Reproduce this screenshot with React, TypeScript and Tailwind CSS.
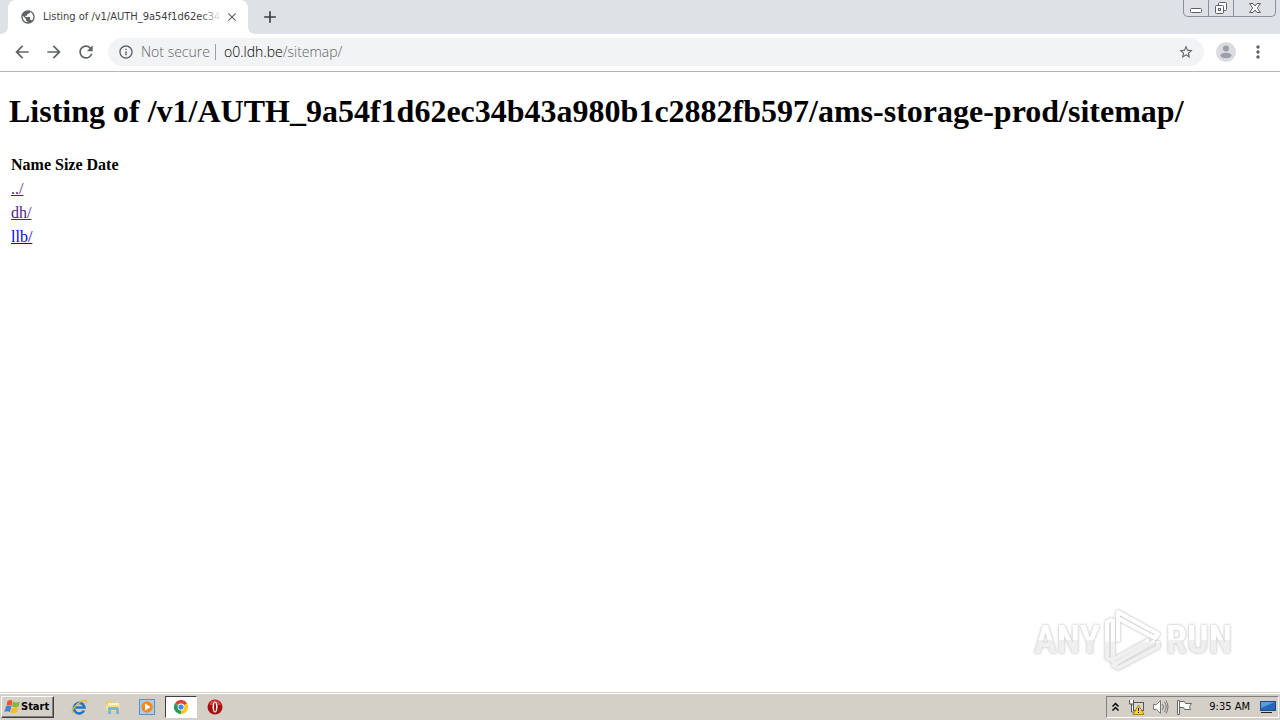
import type { ReactNode } from 'react';
import { MdArrowBack, MdArrowForward, MdRefresh, MdStarBorder, MdMoreVert, MdInfoOutline, MdPublic, MdClose, MdAdd } from 'react-icons/md';

const ENTRIES = [
  { name: '../', visited: true },
  { name: 'dh/', visited: true },
  { name: 'llb/', visited: false },
];

const WindowControls = () => (
  <div className="flex h-[17px] w-[93px] rounded-b-[5px] border border-t-0 border-[#8b9097] text-[#5c6066]">
    <button aria-label="Minimize" className="flex w-[25px] items-center justify-center border-r border-[#8b9097]">
      <svg width="14" height="16" fill="#fff" stroke="currentColor">
        <rect x="1.5" y="8.5" width="11" height="4" rx="1" />
      </svg>
    </button>
    <button aria-label="Restore" className="flex w-[25px] items-center justify-center border-r border-[#8b9097]">
      <svg width="14" height="16" fill="#fff" stroke="currentColor">
        <rect x="4.5" y="2.5" width="8" height="8" rx="1" />
        <rect x="1.5" y="5.5" width="8" height="8" rx="1" />
        <rect x="4.5" y="8.5" width="2" height="2" />
      </svg>
    </button>
    <button aria-label="Close window" className="flex flex-1 items-center justify-center">
      <svg width="14" height="16" fill="#fff" stroke="currentColor">
        <path d="M1.5 3.5h3.5l2 2.5 2-2.5h3.5L9.3 8l3.2 4.5H9L7 10l-2 2.500H1.500L4.700 8z" />
      </svg>
    </button>
  </div>
);

const TabStrip = () => (
  <div className="flex h-[34px] items-start justify-between bg-[#dee1e6]">
    <div className="flex h-full items-end">
      <svg width="8" height="34">
        <path d="M8 26v8H0c5 0 8-3 8-8z" fill="#fff" />
      </svg>
      <div className="flex h-full w-60 items-center rounded-t-lg bg-white pl-3">
        <MdPublic className="size-4 shrink-0 text-[#5f6368]" />
        <span className="relative ml-[7px] w-[178px] text-[11px] whitespace-nowrap text-[#3c4043]">
          Listing of /v1/AUTH_9a54f1d62ec34
          <span className="absolute inset-y-0 right-0 w-5 bg-linear-to-r from-transparent to-white" />
        </span>
        <button aria-label="Close tab" className="ml-1 text-[#5f6368]">
          <MdClose className="size-[14px]" stroke="currentColor" />
        </button>
      </div>
      <svg width="8" height="34">
        <path d="M0 26v8h8c-5 0-8-3-8-8z" fill="#fff" />
      </svg>
      <button aria-label="New tab" className="ml-1 flex h-full items-center text-[#3c4043]">
        <MdAdd className="size-5" />
      </button>
    </div>
    <div className="pr-1">
      <WindowControls />
    </div>
  </div>
);

const Toolbar = () => (
  <div className="flex h-[38px] items-center border-b border-[#b3b5b8] bg-white px-3 pb-[2px] text-[#5f6368]">
    <div className="flex gap-3">
      <button aria-label="Back"><MdArrowBack className="size-5" /></button>
      <button aria-label="Forward"><MdArrowForward className="size-5" /></button>
      <button aria-label="Reload"><MdRefresh className="size-5" /></button>
    </div>
    <div className="ml-3 flex h-7 flex-1 items-center rounded-full bg-[#f1f3f4] px-[10px] font-['Open_Sans','Noto_Sans',sans-serif] text-[14px] font-light">
      <MdInfoOutline className="size-4" />
      <span className="ml-[7px] w-[68px] whitespace-nowrap">Not secure</span>
      <span className="mr-2 ml-[6px] h-4 w-px bg-[#9aa0a6]" />
      <span className="flex-1">
        <span className="text-black">o0.ldh.be</span>/sitemap/
      </span>
      <button aria-label="Bookmark this page"><MdStarBorder className="size-4" stroke="currentColor" /></button>
    </div>
    <button aria-label="Profile" className="ml-3">
      <svg width="20" height="20">
        <circle cx="10" cy="10" r="10" fill="#dadce0" />
        <circle cx="10" cy="6.500" r="3" fill="#9aa0a6" />
        <ellipse cx="10" cy="13.500" rx="5.500" ry="2.700" fill="#9aa0a6" />
      </svg>
    </button>
    <button aria-label="Menu" className="ml-3"><MdMoreVert className="size-5" /></button>
  </div>
);

const Listing = () => (
  <main className="flex-1 px-[9px] pt-[21px] font-['Liberation_Serif',serif] text-[16px] text-black">
    <h1 className="text-[32px] leading-9 font-bold whitespace-nowrap">
      Listing of /v1/AUTH_9a54f1d62ec34b43a980b1c2882fb597/ams-storage-prod/sitemap/
    </h1>
    <table className="mt-6">
      <thead>
        <tr className="h-6 text-left">
          <th className="px-[2px]">Name</th>
          <th className="px-[2px]">Size</th>
          <th className="px-[2px]">Date</th>
        </tr>
      </thead>
      <tbody>
        {ENTRIES.map((entry) => (
          <tr key={entry.name} className="h-6">
            <td className="px-[2px]" colSpan={3}>
              <a href="#" className={`underline ${entry.visited ? 'text-[#551a8b]' : 'text-[#0000ee]'}`}>
                {entry.name}
              </a>
            </td>
          </tr>
        ))}
      </tbody>
    </table>
  </main>
);

const Watermark = () => (
  <div className="pointer-events-none absolute right-12 bottom-12 flex h-[64px] items-center gap-1 font-['Liberation_Sans_Narrow','Roboto_Condensed','Liberation_Sans',sans-serif] text-[38px] leading-none font-bold [filter:drop-shadow(0_0_1px_#ccc)_drop-shadow(0_0_1px_#ddd)]">
    <span className="bg-linear-to-b from-white from-50% to-[#efefef] to-50% bg-clip-text text-transparent">ANY</span>
    <svg width="58" height="62" fill="none" strokeWidth="4" strokeLinejoin="round">
      <defs>
        <linearGradient id="markFade" x1="0" y1="0" x2="0" y2="62" gradientUnits="userSpaceOnUse">
          <stop offset=".5" stopColor="#fff" />
          <stop offset=".55" stopColor="#f0f0f0" />
        </linearGradient>
      </defs>
      <g stroke="url(#markFade)">
        <path d="M14 33V3l40 22-3 4L14 9" />
        <path d="M54 32v6L14 59l-5-3 42-24" />
        <path d="M9 10l-6 3v36l6 3V10M9 51l36-20" />
      </g>
    </svg>
    <span className="bg-linear-to-b from-white from-50% to-[#efefef] to-50% bg-clip-text text-transparent">RUN</span>
  </div>
);

const StartLogo = () => (
  <svg width="17" height="16" viewBox="0 0 16 16">
    <path d="M3 2q3-2 5 0L7 7Q4 5 2 7z" fill="#e8582a" />
    <path d="M8.500 2.500q3.500 2 7 0l-1.500 5q-3.500 1.500-6.500 0z" fill="#80b83c" />
    <path d="M1.500 7.500q3-2 5.300 0l-1.300 5.500Q3 11.500 0 13z" fill="#3f83d4" />
    <path d="M7.300 8q3 2 6.500 0l-1.500 5.500q-3.300 1.500-6.500 0z" fill="#f6bd2c" />
  </svg>
);

const IeIcon = () => (
  <svg width="16" height="16" viewBox="0 0 16 16" fill="none">
    <path d="M13 11.500A5.300 5.300 0 1 1 13.500 8.500H4.500" stroke="#1f77c9" strokeWidth="2.600" />
    <path d="M4.500 7q1-3 4-3" stroke="#7cc5f2" />
    <path d="M2 14Q-.5 12 5 6.500T15 1.500q1 1-.5 3" stroke="#e8b92e" strokeWidth="1.300" />
  </svg>
);

const ExplorerIcon = () => (
  <svg width="16" height="16" viewBox="0 0 16 16">
    <path d="M1 2h5l1 1.500h7V13H1z" fill="#e9cd72" />
    <path d="M3 4h11v5H3z" fill="#fff4bd" />
    <path d="M1 6h14v6H1z" fill="#f5df8e" />
    <path d="M3 15V9.500q0-1.500 1.500-1.500h8Q14 8 14 9.500V15h-3v-4H6v4z" fill="#75b8de" />
  </svg>
);

const PlayerIcon = () => (
  <svg width="16" height="16" viewBox="0 0 16 16">
    <rect x=".5" y=".5" width="15" height="15" fill="#a8cdf0" stroke="#5a91c9" />
    <circle cx="8" cy="8" r="5.700" fill="#f08a1c" />
    <path d="M6 4.500 11.500 8 6 11.500z" fill="#fff" />
  </svg>
);

const ChromeIcon = () => (
  <svg width="14" height="14" viewBox="0 0 14 14">
    <path d="M7 7 .9 3.500A7 7 0 0 1 13.100 3.500z" fill="#dc4335" />
    <path d="M7 7 .9 3.500A7 7 0 0 0 7 14z" fill="#1f9d58" />
    <path d="M7 7l6.100-3.500A7 7 0 0 1 7 14z" fill="#fbc916" />
    <circle cx="7" cy="7" r="3.400" fill="#fff" />
    <circle cx="7" cy="7" r="2.600" fill="#4285f4" />
  </svg>
);

const OperaIcon = () => (
  <svg width="16" height="16" viewBox="0 0 16 16">
    <circle cx="8" cy="8" r="7.500" fill="#a6100f" />
    <path d="M2 6a6.200 6.200 0 0 1 12 0z" fill="#d9403a" />
    <ellipse cx="8" cy="8" rx="2.500" ry="5.500" fill="#fff" />
    <ellipse cx="8" cy="8" rx="1" ry="4.500" fill="#a6100f" />
  </svg>
);

const QuickButton = ({ label, active, children }: { label: string; active?: boolean; children: ReactNode }) => (
  <button
    aria-label={label}
    className={`flex h-[22px] w-8 items-center justify-center ${
      active ? 'border border-t-[#404040] border-r-white border-b-white border-l-[#404040] bg-white' : ''
    }`}
  >
    {children}
  </button>
);

const Tray = () => (
  <div className="flex h-[22px] items-center border border-t-[#808080] border-r-white border-b-white border-l-[#808080] pr-[2px] pl-1">
    <button aria-label="Show hidden icons">
      <svg width="9" height="10" fill="none" stroke="#000" strokeWidth="1.500">
        <path d="M1.500 4.500l3-3 3 3M1.500 8.500l3-3 3 3" />
      </svg>
    </button>
    <svg className="ml-2" width="17" height="16">
      <path d="M1.500 1v4h4V1M3.500 5v8h4" fill="#fff" stroke="#555" />
      <rect x="5.500" y="3.500" width="10" height="8" fill="#d8d8d8" stroke="#555" />
      <path d="M10.500 6 16 15.500H5z" fill="#f9d52a" stroke="#a88412" />
      <path d="M10.500 9v3M10.500 13v1" stroke="#000" />
    </svg>
    <svg className="ml-[7px]" width="17" height="16" fill="none" stroke="#777">
      <path d="M1.500 5.500h3l4-4v13l-4-4h-3z" fill="#fff" />
      <path d="M10.500 5q2 3 0 6M12.500 3q3.500 5 0 10M14 1.500q4 6.500 0 13" />
    </svg>
    <svg className="ml-[7px]" width="17" height="16" fill="#fff" stroke="#666">
      <path d="M1.500 1.500h2v14h-2zM3.500 2.500h5l1 2h6l-2 3 1 3h-6l-1-2h-4z" />
    </svg>
    <time className="ml-4 text-[11px] whitespace-nowrap">9:35 AM</time>
    <button aria-label="Show desktop" className="ml-[10px]">
      <svg width="16" height="14">
        <rect x=".5" y="1.500" width="15" height="9" fill="#2767b8" stroke="#224b83" />
        <path d="M1 2h14L1 8z" fill="#5b9be0" />
        <path d="M1 12.500h11" stroke="#222" />
      </svg>
    </button>
  </div>
);

const Taskbar = () => (
  <footer className="flex h-7 items-center justify-between border-t border-[#d4d0c8] bg-[#d4d0c8] pt-[1px] pr-[1px] pl-[1px] text-black shadow-[inset_0_1px_0_#fff]">
    <div className="flex items-center">
      <button className="flex h-[22px] w-[53px] items-center border border-t-white border-r-[#404040] border-b-[#404040] border-l-white pl-[2px] text-[11px] font-bold shadow-[inset_-1px_-1px_0_#808080]">
        <StartLogo />
        Start
      </button>
      <div className="ml-[9px] flex gap-[2px]">
        <QuickButton label="Internet Explorer"><IeIcon /></QuickButton>
        <QuickButton label="Windows Explorer"><ExplorerIcon /></QuickButton>
        <QuickButton label="Media Player"><PlayerIcon /></QuickButton>
        <QuickButton label="Google Chrome" active><ChromeIcon /></QuickButton>
        <QuickButton label="Opera"><OperaIcon /></QuickButton>
      </div>
    </div>
    <Tray />
  </footer>
);

export default function App() {
  return (
    <div className="relative flex min-h-screen flex-col overflow-hidden bg-white font-['DejaVu_Sans_Condensed','DejaVu_Sans',sans-serif]">
      <header>
        <TabStrip />
        <Toolbar />
      </header>
      <Listing />
      <Watermark />
      <Taskbar />
    </div>
  );
}
